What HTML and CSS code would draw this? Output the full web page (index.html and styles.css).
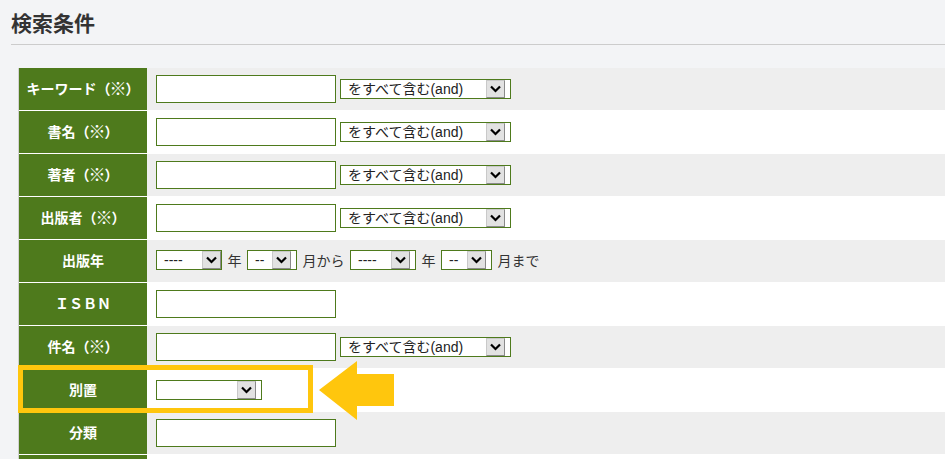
FILE: index.html
```html
<!DOCTYPE html>
<html lang="ja">
<head>
<meta charset="utf-8">
<title>検索条件</title>
<link rel="stylesheet" href="styles.css">
</head>
<body>
<h1 class="title">検索条件</h1>
<div class="form-wrap">
  <div class="form">
    <div class="label">キーワード（<span class="kome">※</span>）</div>
    <div class="value odd">
      <span class="input"></span>
      <span class="sel w171"><span class="sel-text">をすべて含む(and)</span><span class="btn"><svg viewBox="0 0 19 18" width="19" height="18"><polyline points="5,6.5 9.5,11 14,6.5" fill="none" stroke="#000" stroke-width="2.2"/></svg></span></span>
    </div>

    <div class="label">書名（<span class="kome">※</span>）</div>
    <div class="value even">
      <span class="input"></span>
      <span class="sel w171"><span class="sel-text">をすべて含む(and)</span><span class="btn"><svg viewBox="0 0 19 18" width="19" height="18"><polyline points="5,6.5 9.5,11 14,6.5" fill="none" stroke="#000" stroke-width="2.2"/></svg></span></span>
    </div>

    <div class="label">著者（<span class="kome">※</span>）</div>
    <div class="value odd">
      <span class="input"></span>
      <span class="sel w171"><span class="sel-text">をすべて含む(and)</span><span class="btn"><svg viewBox="0 0 19 18" width="19" height="18"><polyline points="5,6.5 9.5,11 14,6.5" fill="none" stroke="#000" stroke-width="2.2"/></svg></span></span>
    </div>

    <div class="label">出版者（<span class="kome">※</span>）</div>
    <div class="value even">
      <span class="input"></span>
      <span class="sel w171"><span class="sel-text">をすべて含む(and)</span><span class="btn"><svg viewBox="0 0 19 18" width="19" height="18"><polyline points="5,6.5 9.5,11 14,6.5" fill="none" stroke="#000" stroke-width="2.2"/></svg></span></span>
    </div>

    <div class="label">出版年</div>
    <div class="value odd dates">
      <span class="sel w66 flush"><span class="sel-text">----</span><span class="btn"><svg viewBox="0 0 19 18" width="19" height="18"><polyline points="5,6.5 9.5,11 14,6.5" fill="none" stroke="#000" stroke-width="2.2"/></svg></span></span>
      <span class="unit">年</span>
      <span class="sel w50"><span class="sel-text">--</span><span class="btn"><svg viewBox="0 0 19 18" width="19" height="18"><polyline points="5,6.5 9.5,11 14,6.5" fill="none" stroke="#000" stroke-width="2.2"/></svg></span></span>
      <span class="unit">月から</span>
      <span class="sel w66"><span class="sel-text">----</span><span class="btn"><svg viewBox="0 0 19 18" width="19" height="18"><polyline points="5,6.5 9.5,11 14,6.5" fill="none" stroke="#000" stroke-width="2.2"/></svg></span></span>
      <span class="unit">年</span>
      <span class="sel w51"><span class="sel-text">--</span><span class="btn"><svg viewBox="0 0 19 18" width="19" height="18"><polyline points="5,6.5 9.5,11 14,6.5" fill="none" stroke="#000" stroke-width="2.2"/></svg></span></span>
      <span class="unit">月まで</span>
    </div>

    <div class="label">ＩＳＢＮ</div>
    <div class="value even">
      <span class="input"></span>
    </div>

    <div class="label">件名（<span class="kome">※</span>）</div>
    <div class="value odd">
      <span class="input"></span>
      <span class="sel w171"><span class="sel-text">をすべて含む(and)</span><span class="btn"><svg viewBox="0 0 19 18" width="19" height="18"><polyline points="5,6.5 9.5,11 14,6.5" fill="none" stroke="#000" stroke-width="2.2"/></svg></span></span>
    </div>

    <div class="label">別置</div>
    <div class="value even">
      <span class="sel w106"><span class="sel-text"></span><span class="btn"><svg viewBox="0 0 19 18" width="19" height="18"><polyline points="5,6.5 9.5,11 14,6.5" fill="none" stroke="#000" stroke-width="2.2"/></svg></span></span>
    </div>

    <div class="label">分類</div>
    <div class="value odd">
      <span class="input"></span>
    </div>

    <div class="label"></div>
    <div class="value even"></div>
  </div>

  <div class="highlight"></div>
  <svg class="arrow" viewBox="0 0 76 60" width="76" height="60">
    <polygon points="0,29 38,0 38,13 75,13 75,45 38,45 38,59" fill="#ffc60d"/>
  </svg>
</div>
</body>
</html>
```

FILE: styles.css
```css
html, body {
  margin: 0;
  padding: 0;
}
body {
  background: #f3f4f6;
  font-family: "Liberation Sans", "Noto Sans CJK JP", sans-serif;
  color: #333;
  overflow: hidden;
  height: 459px;
}
.title {
  margin: 0 0 0 11px;
  padding: 7px 0 7px 0;
  font-family: "Noto Sans CJK JP", sans-serif;
  font-size: 21px;
  line-height: 30px;
  font-weight: bold;
  color: #333;
  border-bottom: 1px solid #cccccc;
}
.form-wrap {
  position: relative;
  margin: 23px 0 0 18px;
}
.form {
  display: grid;
  grid-template-columns: 128px 1fr;
  border-left: 1px solid #d2d2d2;
}
.label, .value {
  box-sizing: border-box;
  height: 43px;
  border-bottom: 1px solid #ffffff;
}
.label {
  background: #4e7a1c;
  color: #ffffff;
  font-family: "Noto Sans CJK JP", sans-serif;
  font-weight: bold;
  font-size: 14px;
  line-height: 20px;
  padding-bottom: 2px;
  display: flex;
  align-items: center;
  justify-content: center;
  white-space: nowrap;
}
.kome {
  font-size: 17px;
  line-height: 14px;
  margin: 0 -1px;
}
.value {
  display: flex;
  align-items: center;
  gap: 4px;
  padding-left: 9px;
}
.value.odd { background: #eeeeee; }
.value.even { background: #ffffff; }
.input {
  box-sizing: border-box;
  width: 180px;
  height: 28px;
  background: #fff;
  border: 1px solid #4e7a1c;
}
.sel {
  box-sizing: border-box;
  height: 20px;
  display: inline-flex;
  align-items: stretch;
  background: #fff;
  border: 1px solid #4e7a1c;
  padding-right: 5px;
  font-size: 14px;
  color: #222;
}
.sel.flush { padding-right: 0; }
.sel-text {
  flex: 1;
  padding-left: 7px;
  line-height: 18px;
  white-space: nowrap;
  overflow: hidden;
}
.btn {
  box-sizing: border-box;
  width: 19px;
  height: 18px;
  background: #e2e2e2;
  border: 1px solid;
  border-color: #c9c9c9 #8a8a8a #8a8a8a #c9c9c9;
  display: flex;
}
.btn svg {
  margin: -1px;
}
.w171 { width: 171px; }
.w66 { width: 66px; }
.w50 { width: 50px; }
.w51 { width: 51px; }
.w106 { width: 106px; }
.dates { gap: 0; padding-bottom: 2px; }
.unit {
  font-family: "Noto Sans CJK JP", sans-serif;
  font-size: 14px;
  color: #333;
  margin: 0 5.5px;
}
.highlight {
  position: absolute;
  left: 0;
  top: 297px;
  width: 295px;
  height: 48px;
  box-sizing: border-box;
  border: 5px solid #ffc60d;
}
.arrow {
  position: absolute;
  left: 301px;
  top: 293px;
}
```
